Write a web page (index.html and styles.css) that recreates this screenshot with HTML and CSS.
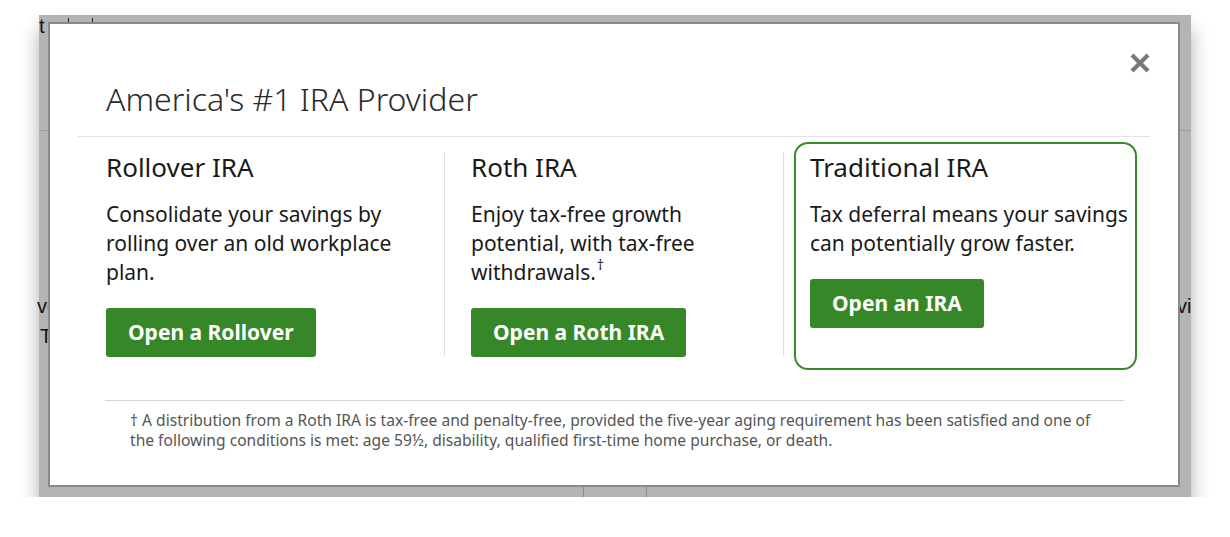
FILE: index.html
```html
<!DOCTYPE html>
<html lang="en">
<head>
    <meta charset="UTF-8">
    <meta name="viewport" content="width=device-width, initial-scale=1.0">
    <title>America's #1 IRA Provider</title>
    <link rel="stylesheet" href="styles.css">
</head>
<body>
<div id="backdrop">
    <!-- bits of the page behind the dialog -->
    <span class="peek peek-t">t</span>
    <span class="tick tick-1"></span>
    <span class="tick tick-2"></span>
    <span class="rule rule-left"></span>
    <span class="rule rule-right"></span>
    <span class="peek peek-ve">ve</span>
    <span class="peek peek-T">T</span>
    <span class="peek peek-vi">vi</span>
    <span class="post post-1"></span>
    <span class="post post-2"></span>

    <div id="modal" role="dialog" aria-labelledby="modalTitle">
        <button class="close" aria-label="Close">
            <svg width="22" height="22" viewBox="0 0 22 22">
                <path d="M3 3 L19 19 M19 3 L3 19" stroke="#7a7a7a" stroke-width="4.2" stroke-linecap="butt"/>
            </svg>
        </button>

        <div class="modal-header">
            <h2 id="modalTitle">America's #1 IRA Provider</h2>
        </div>

        <div class="options">
            <div class="option option-split">
                <h3>Rollover IRA</h3>
                <p>Consolidate your savings by rolling over an old workplace plan.</p>
                <a href="#" class="btn">Open a Rollover</a>
            </div>
            <div class="option option-split option-mid">
                <h3>Roth IRA</h3>
                <p>Enjoy tax-free growth potential, with tax-free withdrawals.<span class="mark">†</span></p>
                <a href="#" class="btn">Open a Roth IRA</a>
            </div>
            <div class="option-wrap">
                <div class="option option-featured">
                    <h3>Traditional IRA</h3>
                    <p>Tax deferral means your savings can potentially grow faster.</p>
                    <a href="#" class="btn">Open an IRA</a>
                </div>
            </div>
        </div>

        <div class="footnote">
            <p>† A distribution from a Roth IRA is tax-free and penalty-free, provided the five-year aging requirement has been satisfied and one of the following conditions is met: age 59½, disability, qualified first-time home purchase, or death.</p>
        </div>
    </div>
</div>
</body>
</html>
```

FILE: styles.css
```css
body {
    margin: 0;
    background: #fff;
    font-family: "Noto Sans", "Open Sans", sans-serif;
    color: #1a1a1a;
}

#backdrop {
    position: relative;
    width: 1152px;
    height: 482px;
    margin: 15px 0 0 39px;
    padding: 7px 0 0 9px;
    box-sizing: border-box;
    background: #b4b4b4;
    box-shadow: 0 14px 18px rgba(0, 0, 0, 0.32);
}

.peek {
    position: absolute;
    font-family: "Liberation Sans", sans-serif;
    font-size: 20px;
    color: #111;
}

.peek-t { left: 0; top: 0; }
.peek-ve { left: -2px; top: 280px; }
.peek-T { left: 1px; top: 310px; }
.peek-vi { left: 1138px; top: 280px; }

.tick {
    position: absolute;
    top: 3px;
    width: 1px;
    height: 4px;
    background: #222;
}

.tick-1 { left: 29px; }
.tick-2 { left: 53px; }

.rule {
    position: absolute;
    top: 115px;
    height: 1px;
    width: 11px;
    background: #9c9c9c;
}

.rule-left { left: 0; }
.rule-right { right: 0; }

.post {
    position: absolute;
    bottom: 0;
    width: 1px;
    height: 10px;
    background: #8c8c8c;
}

.post-1 { left: 544px; }
.post-2 { left: 607px; }

#modal {
    position: relative;
    z-index: 1;
    width: 1132px;
    height: 465px;
    box-sizing: border-box;
    padding: 0 28px;
    background: #fff;
    border: 2px solid #8a8a8a;
}

.close {
    position: absolute;
    top: 28px;
    right: 27px;
    padding: 0;
    border: 0;
    background: none;
    line-height: 0;
    cursor: pointer;
}

.modal-header {
    padding: 57px 28px 0;
    height: 113px;
    box-sizing: border-box;
    border-bottom: 1px solid #e2e2e2;
}

.modal-header h2 {
    margin: 0;
    font-size: 32px;
    font-weight: 300;
    line-height: 36px;
    color: #2a2a2a;
}

.options {
    display: flex;
    padding: 5px 0 0 28px;
}

.option h3 {
    margin: 0 0 18px;
    font-size: 26px;
    font-weight: 400;
    line-height: 30px;
}

.option p {
    margin: 0 0 21px;
    font-size: 21px;
    line-height: 29px;
}

.option .mark {
    font-size: 14px;
    line-height: 14px;
    vertical-align: top;
    margin-left: 1px;
}

.option-split {
    width: 339px;
    height: 204px;
    box-sizing: border-box;
    margin: 10px 0 14px;
    border-right: 1px solid #dedede;
}

.option-mid {
    padding-left: 26px;
}

.option-split p {
    padding-right: 30px;
}

.option-wrap {
    padding-left: 10px;
}

.option-featured {
    width: 343px;
    height: 228px;
    box-sizing: border-box;
    padding: 8px 2px 0 14px;
    border: 2px solid #3a8a2c;
    border-radius: 14px;
}

.btn {
    display: inline-block;
    padding: 12px 22px;
    background: #368727;
    border-radius: 3px;
    color: #fff;
    font-size: 21px;
    font-weight: 700;
    line-height: 25px;
    text-decoration: none;
}

.footnote {
    margin: 30px 26px 0 27px;
    padding: 9px 20px 0 25px;
    border-top: 1px solid #d6d6d6;
}

.footnote p {
    margin: 0;
    font-size: 15.6px;
    line-height: 20px;
    color: #555;
}
```
